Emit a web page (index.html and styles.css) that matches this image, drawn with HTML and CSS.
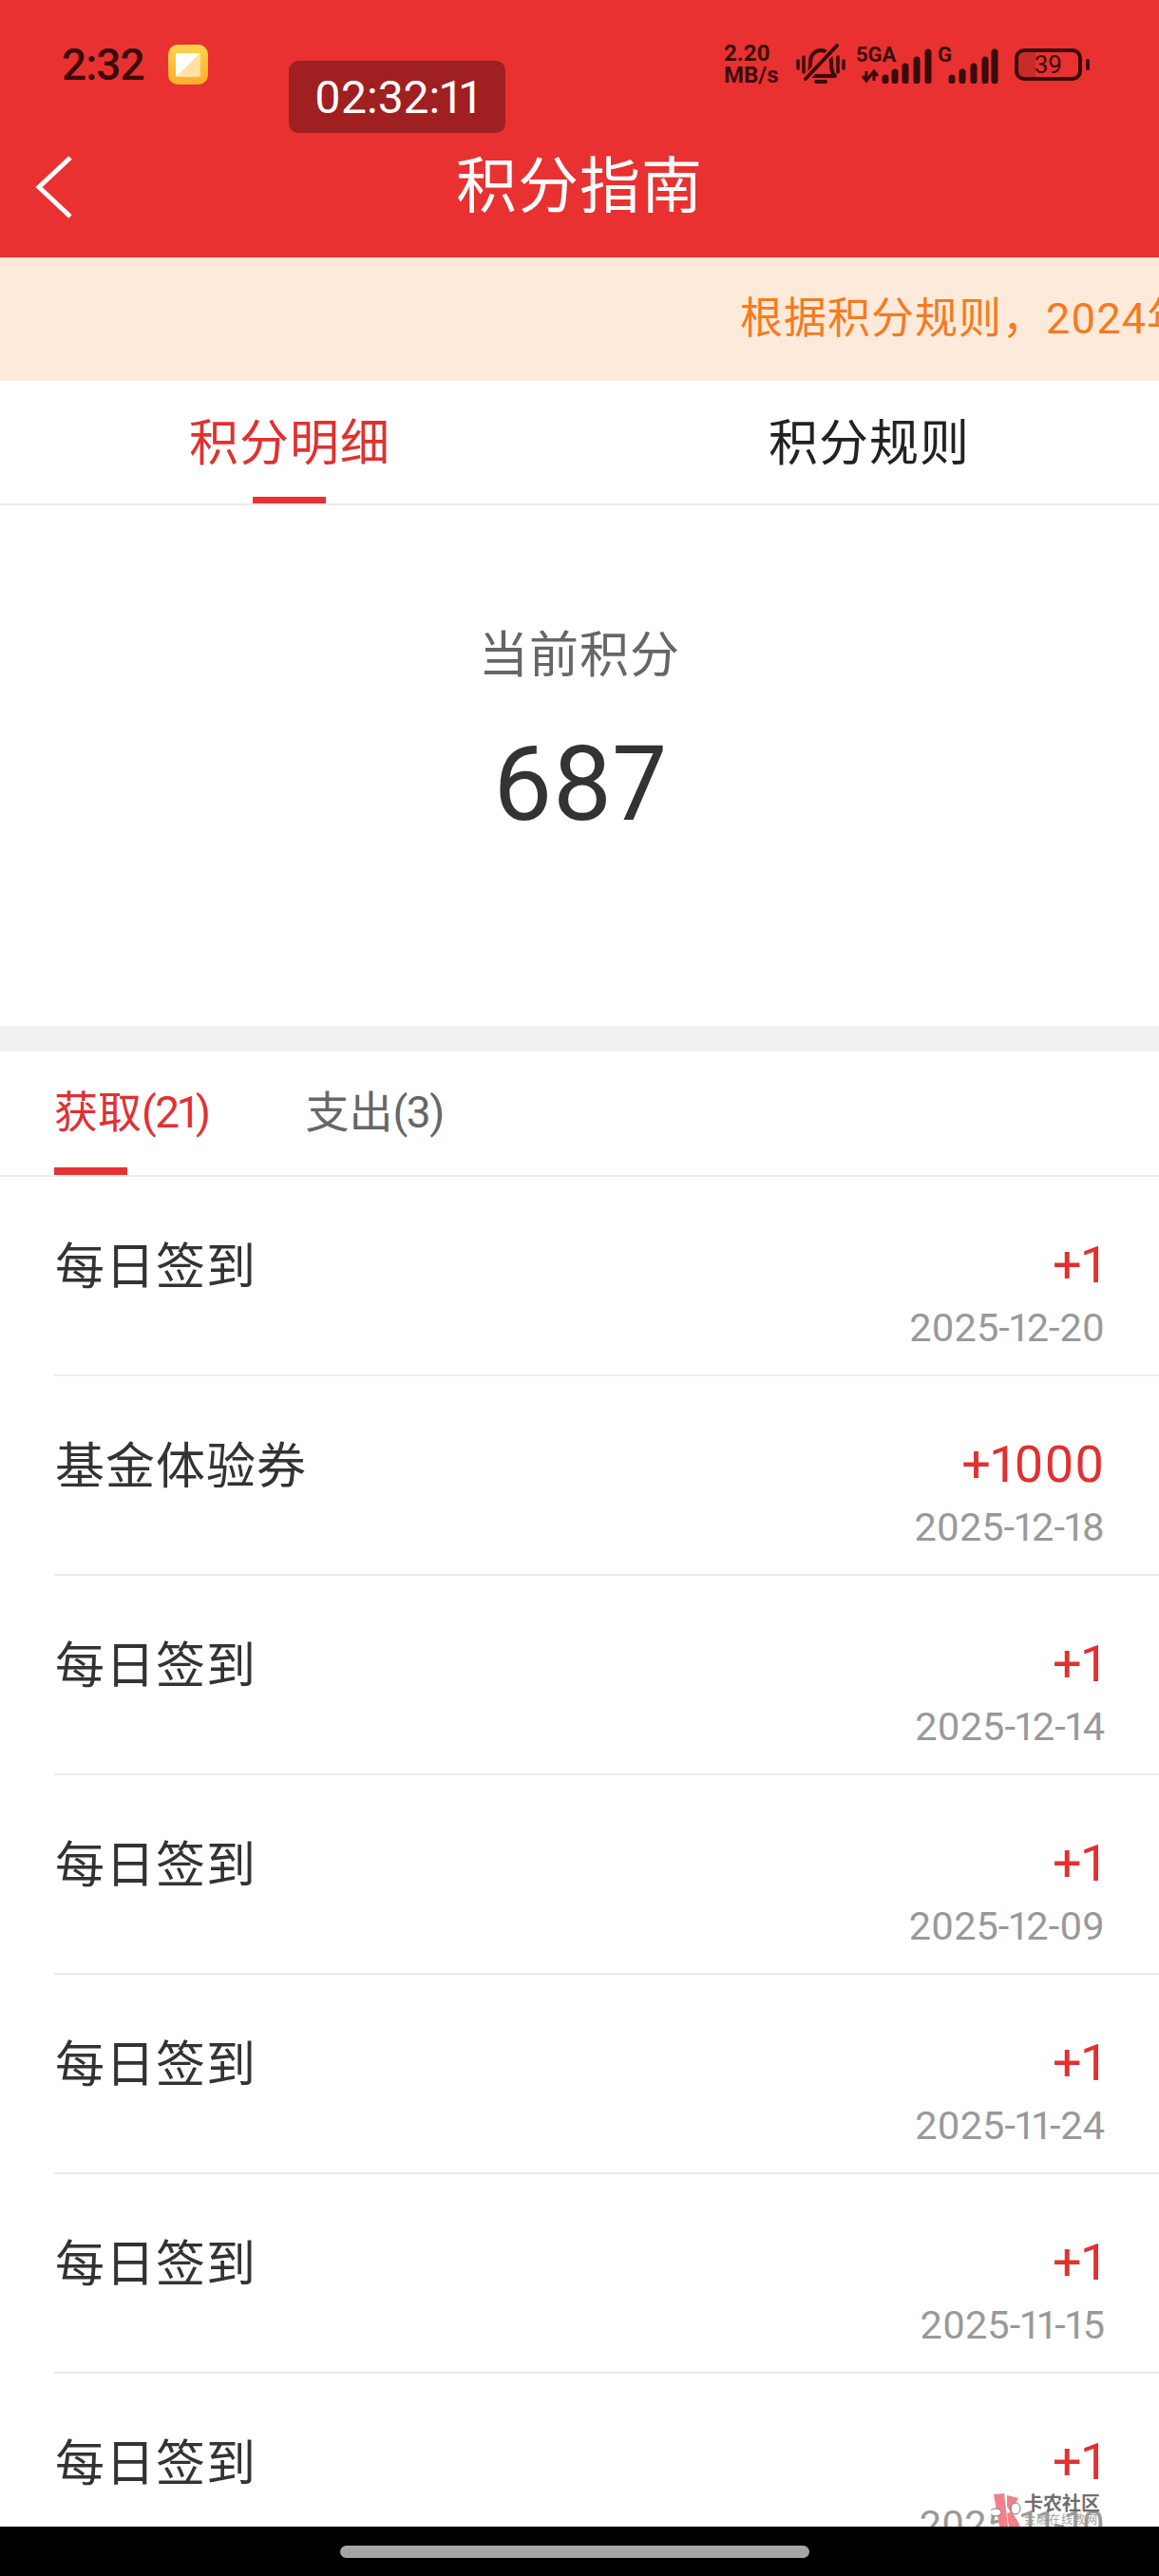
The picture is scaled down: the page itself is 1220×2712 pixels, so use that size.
FILE: index.html
```html
<!DOCTYPE html>
<html lang="zh-CN">
<head>
    <meta charset="UTF-8">
    <meta name="viewport" content="width=device-width, initial-scale=1.0">
    <title>积分指南</title>
    <link rel="stylesheet" href="styles.css">
</head>
<body>
    <div class="page">
        <header class="top">
            <div class="status">
                <span class="clock">2:32</span>
                <span class="app-icon"><span class="app-icon-inner"></span></span>
                <div class="status-right">
                    <span class="speed">2.20<br>MB/s</span>
                    <svg class="bell" viewBox="0 0 52 44">
                        <path d="M12 34c3-4 3-9 3-15 0-7 5-12 11-12s11 5 11 12c0 6 0 11 4 15z" fill="none" stroke="#3a0b0b" stroke-width="4" stroke-linejoin="round"/>
                        <path d="M21 40h10" stroke="#3a0b0b" stroke-width="4" stroke-linecap="round"/>
                        <path d="M43 2 10 37" stroke="#e93131" stroke-width="8"/>
                        <path d="M43 2 10 37" stroke="#3a0b0b" stroke-width="4" stroke-linecap="round"/>
                        <path d="M2 18v8M8 14v16M44 14v16M50 18v8" stroke="#3a0b0b" stroke-width="3.5" stroke-linecap="round"/>
                    </svg>
                    <svg class="signal" viewBox="0 -5 80 45">
                        <text x="0" y="17" class="net">5GA</text>
                        <path d="M11 27v10M7 32l4 5 4-5M19 37V27M15 32l4-5 4 5" fill="none" stroke="#3a0b0b" stroke-width="3"/>
                        <path d="M31 34v3M41 28v9M52 22v15M64 15v22M76 7v30" stroke="#3a0b0b" stroke-width="7" stroke-linecap="round"/>
                    </svg>
                    <svg class="signal small" viewBox="0 -5 64 45">
                        <text x="0" y="17" class="net">G</text>
                        <path d="M15 34v3M26 28v9M38 22v15M50 15v22M60 7v30" stroke="#3a0b0b" stroke-width="7" stroke-linecap="round"/>
                    </svg>
                    <span class="battery">
                        <span class="battery-body"><span class="battery-num">39</span></span>
                        <span class="battery-tip"></span>
                    </span>
                </div>
            </div>
            <div class="timer">02:32:11</div>
            <div class="title-row">
                <svg class="back" viewBox="0 0 44 70"><path d="M39 6 6 37l33 31" fill="none" stroke="#fff" stroke-width="5"/></svg>
                <h1>积分指南</h1>
            </div>
        </header>
        <div class="notice">根据积分规则，2024年</div>
        <nav class="tabs">
            <div class="tab active">积分明细</div>
            <div class="tab">积分规则</div>
        </nav>
        <section class="summary">
            <div class="summary-label">当前积分</div>
            <div class="summary-num">687</div>
        </section>
        <nav class="subtabs">
            <div class="subtab active">获取<span class="count">(21)</span></div>
            <div class="subtab">支出<span class="count">(3)</span></div>
        </nav>
        <ul class="list">
            <li class="row"><span class="name">每日签到</span><div class="right"><span class="pts">+1</span><span class="date">2025-12-20</span></div></li>
            <li class="row"><span class="name">基金体验券</span><div class="right"><span class="pts">+1000</span><span class="date">2025-12-18</span></div></li>
            <li class="row"><span class="name">每日签到</span><div class="right"><span class="pts">+1</span><span class="date">2025-12-14</span></div></li>
            <li class="row"><span class="name">每日签到</span><div class="right"><span class="pts">+1</span><span class="date">2025-12-09</span></div></li>
            <li class="row"><span class="name">每日签到</span><div class="right"><span class="pts">+1</span><span class="date">2025-11-24</span></div></li>
            <li class="row"><span class="name">每日签到</span><div class="right"><span class="pts">+1</span><span class="date">2025-11-15</span></div></li>
            <li class="row"><span class="name">每日签到</span><div class="right"><span class="pts">+1</span><span class="date">2025-11-10</span></div></li>
        </ul>
        <div class="watermark">
            <svg viewBox="0 0 32 36">
                <path d="M3 1 14 0l4 35H9zM17 2l12 3-8 15-4-6zM17 21l5-2 9 15-12 2z" fill="#f2808a"/>
                <ellipse cx="5" cy="20" rx="6" ry="4" fill="#fff" stroke="#777"/>
                <ellipse cx="26" cy="16" rx="5" ry="6" fill="#fff" stroke="#777"/>
            </svg>
            <div class="watermark-text">
                <span class="watermark-name">卡农社区</span>
                <span class="watermark-sub">金融在线教网</span>
            </div>
        </div>
        <div class="navbar"><span class="pill"></span></div>
    </div>
</body>
</html>
```

FILE: styles.css
```css
* {
    box-sizing: border-box;
}
html, body {
    margin: 0;
    padding: 0;
}
body {
    font-family: Roboto, "Noto Sans CJK SC", sans-serif;
    font-variant-numeric: proportional-nums;
    background: #fff;
}
.page {
    position: relative;
    width: 1220px;
    height: 2712px;
    overflow: hidden;
    background: #fff;
}
.top {
    position: relative;
    height: 271px;
    background: #e93131;
}
.status {
    display: flex;
    align-items: center;
    height: 90px;
    padding: 46px 73px 0 65px;
}
.clock {
    font-size: 46px;
    font-weight: 500;
    letter-spacing: -1px;
    color: #3a0b0b;
}
.app-icon {
    display: flex;
    align-items: center;
    justify-content: center;
    width: 42px;
    height: 42px;
    margin-left: 25px;
    border-radius: 10px;
    background: linear-gradient(#ffd44f, #ffab2a);
}
.app-icon-inner {
    width: 26px;
    height: 25px;
    border-radius: 2px;
    background: linear-gradient(135deg, #fff 50%, #ffe2a4 51%);
}
.status-right {
    display: flex;
    align-items: center;
    margin-left: auto;
}
.speed {
    width: 63px;
    font-size: 24px;
    font-weight: 700;
    line-height: 23px;
    color: #3a0b0b;
}
.bell {
    width: 52px;
    height: 44px;
    margin-left: 13px;
}
.signal {
    width: 80px;
    height: 45px;
    margin-top: -5px;
    margin-left: 11px;
}
.signal.small {
    width: 64px;
    margin-left: 6px;
}
.net {
    font: 700 22px Roboto, sans-serif;
    fill: #3a0b0b;
}
.battery {
    display: flex;
    align-items: center;
    gap: 4px;
    margin-left: 17px;
}
.battery-body {
    display: flex;
    align-items: center;
    justify-content: center;
    width: 71px;
    height: 34px;
    border: 4px solid #3a0b0b;
    border-radius: 10px;
    background: linear-gradient(90deg, #c92a2a 28%, transparent 28%);
}
.battery-num {
    font-size: 26px;
    color: #3a0b0b;
}
.battery-tip {
    width: 4px;
    height: 12px;
    border-radius: 2px;
    background: #3a0b0b;
}
.timer {
    position: absolute;
    top: 64px;
    left: 304px;
    width: 228px;
    height: 76px;
    border-radius: 10px;
    background: #a01f20;
    color: #fff;
    font-size: 48px;
    line-height: 78px;
    text-align: center;
}
.title-row {
    position: relative;
    display: flex;
    align-items: center;
    justify-content: center;
    height: 66px;
    margin-top: 70px;
}
.back {
    position: absolute;
    left: 35px;
    top: 0;
    width: 44px;
    height: 70px;
}
h1 {
    margin: -6px 0 0;
    font-size: 64px;
    font-weight: 400;
    color: #fff;
    letter-spacing: 1px;
}
.notice {
    height: 130px;
    padding-left: 779px;
    overflow: hidden;
    background: #feeadb;
    color: #f47b20;
    font-size: 45px;
    letter-spacing: 1px;
    line-height: 130px;
    white-space: nowrap;
}
.tabs {
    display: flex;
    height: 131px;
    border-bottom: 2px solid #ececec;
}
.tab {
    position: relative;
    flex: 1;
    font-size: 52px;
    letter-spacing: 1px;
    line-height: 134px;
    text-align: center;
    color: #222;
}
.tab.active {
    color: #e03131;
}
.tab.active::after {
    content: "";
    position: absolute;
    left: 266px;
    bottom: 0;
    width: 77px;
    height: 7px;
    background: #e53333;
}
.summary {
    height: 575px;
    border-bottom: 27px solid #f1f1f1;
    text-align: center;
}
.summary-label {
    padding-top: 124px;
    font-size: 52px;
    letter-spacing: 1px;
    line-height: 70px;
    color: #666;
}
.summary-num {
    margin-top: 35px;
    font-size: 110px;
    line-height: 130px;
    color: #333;
}
.subtabs {
    display: flex;
    gap: 101px;
    height: 132px;
    padding-left: 57px;
    border-bottom: 2px solid #ececec;
}
.subtab {
    position: relative;
    font-size: 46px;
    line-height: 128px;
    color: #666;
}
.count {
    letter-spacing: -1.5px;
}
.subtab.active {
    color: #e03131;
}
.subtab.active::after {
    content: "";
    position: absolute;
    left: 0;
    bottom: 0;
    width: 77px;
    height: 8px;
    background: #e53333;
}
.list {
    margin: 0;
    padding: 0 0 0 57px;
    list-style: none;
}
.row {
    display: flex;
    justify-content: space-between;
    height: 210px;
    padding: 58px 57px 0 0;
    border-bottom: 2px solid #ececec;
}
.name {
    padding: 3px 0 0 1px;
    font-size: 52px;
    letter-spacing: 1px;
    line-height: 70px;
    color: #333;
}
.right {
    display: flex;
    flex-direction: column;
    align-items: flex-end;
}
.pts {
    font-size: 54px;
    letter-spacing: 0.5px;
    line-height: 70px;
    color: #e03131;
}
.date {
    font-size: 41.5px;
    line-height: 62px;
    color: #999;
}
.watermark {
    position: absolute;
    left: 1043px;
    top: 2625px;
    display: flex;
    gap: 3px;
}
.watermark svg {
    width: 32px;
    height: 36px;
}
.watermark-text {
    display: flex;
    flex-direction: column;
    color: #6e6e6e;
}
.watermark-name {
    font-size: 20px;
    font-weight: 700;
    line-height: 22px;
}
.watermark-sub {
    font-size: 12px;
    letter-spacing: 1px;
    line-height: 13px;
    color: #a0a0a0;
}
.navbar {
    position: absolute;
    left: 0;
    right: 0;
    bottom: 0;
    display: flex;
    align-items: center;
    justify-content: center;
    height: 52px;
    background: #000;
}
.pill {
    width: 494px;
    height: 13px;
    margin-left: -11px;
    border-radius: 7px;
    background: #a6a6a6;
}
```
